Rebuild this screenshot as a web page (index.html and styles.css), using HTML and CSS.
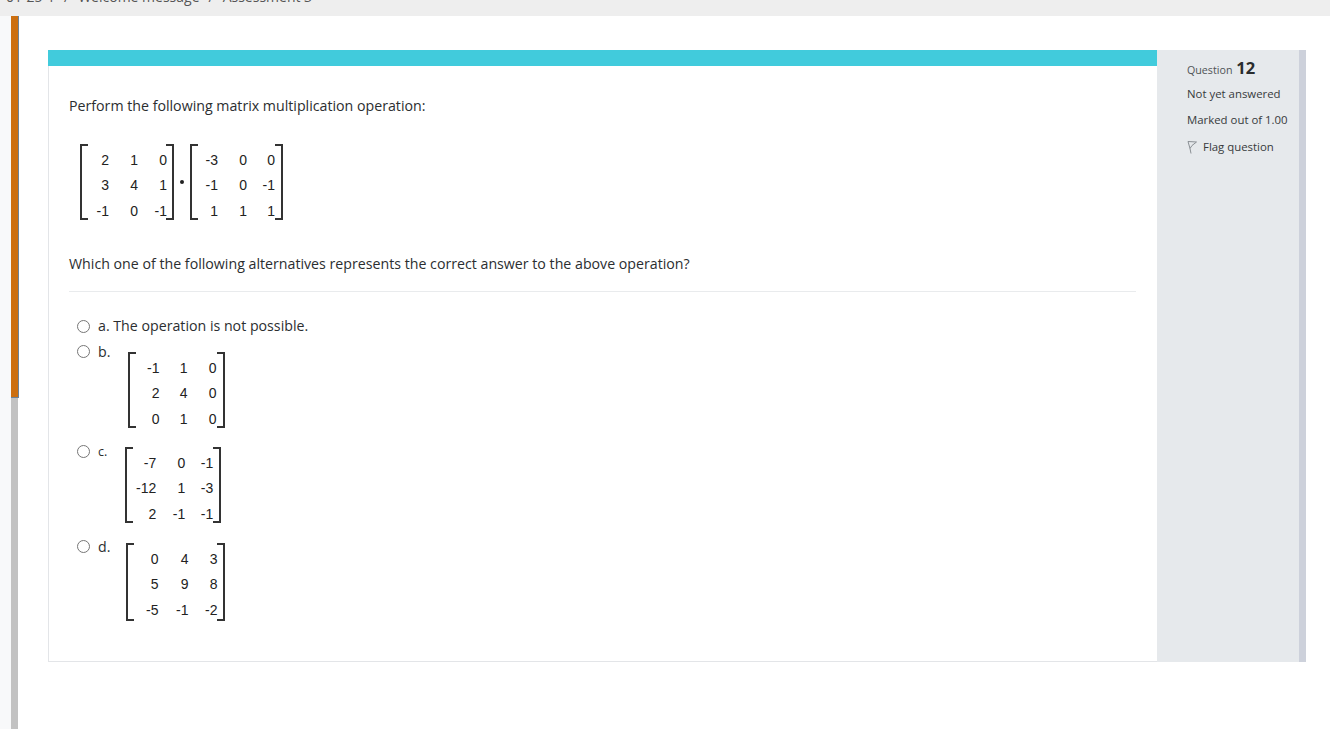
FILE: index.html
```html
<!DOCTYPE html>
<html lang="en">
<head>
<meta charset="utf-8">
<title>Assessment 3</title>
<link rel="stylesheet" href="styles.css">
</head>
<body>
<div class="crumbs"><span>01-25-1</span><span>/</span><span>Welcome message</span><span>/</span><span>Assessment 3</span></div>
<div class="page">
  <div class="rail"><div class="rail-track"><div class="rail-thumb"></div></div></div>
  <main class="main">
    <div class="question">
      <section class="content">
        <div class="accent"></div>
        <div class="body">
          <p class="text first">Perform the following matrix multiplication operation:</p>
          <div class="expr">
            <div class="matrix m-q1">
              <span>2</span><span>1</span><span>0</span>
              <span>3</span><span>4</span><span>1</span>
              <span>-1</span><span>0</span><span>-1</span>
            </div>
            <span class="dot"></span>
            <div class="matrix m-q2">
              <span>-3</span><span>0</span><span>0</span>
              <span>-1</span><span>0</span><span>-1</span>
              <span>1</span><span>1</span><span>1</span>
            </div>
          </div>
          <p class="text second">Which one of the following alternatives represents the correct answer to the above operation?</p>
          <hr class="rule">
          <div class="option opt-a"><span class="radio"></span><span class="label">a. The operation is not possible.</span></div>
          <div class="option opt-b"><span class="radio"></span><span class="label">b.</span>
            <div class="matrix m-b">
              <span>-1</span><span>1</span><span>0</span>
              <span>2</span><span>4</span><span>0</span>
              <span>0</span><span>1</span><span>0</span>
            </div>
          </div>
          <div class="option opt-c"><span class="radio"></span><span class="label">c.</span>
            <div class="matrix m-c">
              <span>-7</span><span>0</span><span>-1</span>
              <span>-12</span><span>1</span><span>-3</span>
              <span>2</span><span>-1</span><span>-1</span>
            </div>
          </div>
          <div class="option opt-d"><span class="radio"></span><span class="label">d.</span>
            <div class="matrix m-d">
              <span>0</span><span>4</span><span>3</span>
              <span>5</span><span>9</span><span>8</span>
              <span>-5</span><span>-1</span><span>-2</span>
            </div>
          </div>
        </div>
      </section>
      <aside class="info">
        <div class="qno">Question <b>12</b></div>
        <div class="state">Not yet answered</div>
        <div class="grade">Marked out of 1.00</div>
        <div class="flag">
          <svg class="flag-icon" width="10" height="14" viewBox="0 0 10 14"><path d="M1 1.5 L9.5 2 L5 5.5 L3 8.5 Z M3 8.5 L4 13.5" fill="none" stroke="#8a8f94" stroke-width="1"/></svg>
          <span>Flag question</span>
        </div>
      </aside>
      <div class="edge"></div>
    </div>
  </main>
</div>
</body>
</html>
```
FILE: styles.css
```css
* { box-sizing: border-box; }
html, body { margin: 0; height: 100%; background: #fff; overflow: hidden; }
body { font-family: "Open Sans", "Noto Sans", sans-serif; color: #373a3c; font-size: 14px; }

.crumbs { height: 16px; background: #eeeeee; overflow: hidden; display: flex; gap: 9px; padding-left: 6px; font-size: 14px; line-height: 20px; color: #555; white-space: nowrap; }
.crumbs span { display: block; margin-top: -13px; }

.page { display: flex; height: 713px; }
.rail { width: 19px; background: linear-gradient(to right, #f8f9fa 11px, #fff 11px); flex: none; padding-left: 11px; }
.rail-track { width: 7px; height: 100%; background: #c2c2c2; }
.rail-thumb { width: 8px; height: 382px; background: #cc6f10; border-right: 1px solid #6b8299; border-bottom: 1px solid #6b8299; }

.main { flex: 1; padding: 34px 24px 0 29px; }
.question { display: flex; height: 612px; }
.content { width: 1109px; border: 1px solid #e3e5e8; border-top: 0; border-right: 0; }
.accent { height: 16px; margin-left: -1px; background: #41cbdc; }
.body { padding: 0 20px 0 20px; }

.text { margin: 0; font-size: 14.2px; line-height: 22px; color: #2b2e30; }
.first { padding-top: 29px; }
.second { margin-top: 33px; }

.expr { display: flex; align-items: flex-start; margin-top: 27px; padding-left: 11px; }
.dot { width: 4px; height: 4px; border-radius: 50%; background: #222; margin: 36px 6px 0 6px; flex: none; }

.matrix {
  display: grid; position: relative; flex: none;
  grid-auto-rows: 25.5px;
  align-items: center; justify-items: end;
  font-family: "Liberation Sans", Arial, sans-serif; font-size: 14px; color: #222;
  height: 76px; padding-top: 3px;
}
.matrix span { line-height: 16px; }
.matrix::before, .matrix::after {
  content: ""; position: absolute; top: 0; bottom: 0; width: 6px;
  border: 2px solid #333;
}
.matrix::before { left: 0; border-right: 0; }
.matrix::after { right: 0; border-left: 0; }

.m-q1 { grid-template-columns: 29px 29px 29px; width: 94px; padding-right: 7px; }
.m-q2 { grid-template-columns: 28px 29px 28px; width: 93px; padding-right: 8px; }

.rule { border: 0; border-top: 1px solid #e9ebed; margin: 16px 1px 0 0; }

.option { display: flex; align-items: flex-start; padding-left: 8px; }
.radio { width: 13px; height: 13px; border: 1px solid #767676; border-radius: 50%; flex: none; background: #fff; }
.label { margin-left: 8px; font-size: 14.2px; line-height: 20px; color: #2b2e30; }

.opt-a { margin-top: 24px; height: 20px; align-items: center; }
.opt-b { margin-top: 9px; }
.opt-c { margin-top: 17px; }
.opt-d { margin-top: 17px; }
.opt-b .label, .opt-c .label, .opt-d .label { margin-top: -3px; }
.opt-c .label { font-size: 12.5px; }

.m-b { margin-left: 18px; margin-top: 7px; width: 97px; grid-template-columns: 31px 28px 29px; padding-right: 9px; }
.m-c { margin-left: 18px; margin-top: 2px; width: 96px; grid-template-columns: 31px 29px 28px; padding-right: 8px; }
.m-d { margin-left: 16px; margin-top: 3px; width: 99px; height: 78px; grid-template-columns: 32px 30px 29px; padding-right: 8px; }

.info { width: 142px; background: #e6e9ec; padding: 6px 0 0 30px; font-size: 11.4px; color: #373a3c; }
.qno { font-size: 10.7px; line-height: 24px; height: 24px; color: #4f5356; }
.qno b { font-size: 16.5px; font-weight: 700; color: #2a2c2e; margin-left: 1px; }
.state { margin-top: 4px; line-height: 20px; }
.grade { margin-top: 6px; line-height: 20px; }
.flag { margin-top: 7px; line-height: 20px; display: flex; align-items: center; gap: 6px; }
.flag-icon { flex: none; }
.edge { width: 7px; background: #cdd1db; }
```
